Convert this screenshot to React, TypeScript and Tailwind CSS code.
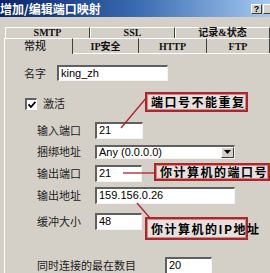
import React from "react";

const cjk = { fontFamily: '"Noto Sans CJK SC", "Liberation Sans", sans-serif' };
const latin = { fontFamily: '"Liberation Sans", "Noto Sans CJK SC", sans-serif' };
const serif = { fontFamily: '"Liberation Serif", "Noto Sans CJK SC", serif' };

function Field({ value, w, h = "h-[17px]" }: { value: string; w: string; h?: string }) {
    return (
        <div
            className={`${w} ${h} bg-white border-t-2 border-l-2 border-t-[#606060] border-l-[#606060] border-b border-r border-b-[#f4f4f4] border-r-[#f4f4f4] text-[11px] leading-[13px] pl-[2px] text-black`}
            style={latin}
        >
            {value}
        </div>
    );
}

function Row({ label, children, mt, h = "h-[17px]" }: { label: string; children: React.ReactNode; mt: string; h?: string }) {
    return (
        <div className={`flex items-center ${h} ${mt}`}>
            <span className="w-[90px] pl-[32px] whitespace-nowrap text-[11px] leading-[13px] text-[#222]" style={cjk}>
                {label}
            </span>
            {children}
        </div>
    );
}

function Callout({ text, className }: { text: string; className: string }) {
    return (
        <div
            className={`absolute border-2 border-[#a8282c] bg-[#e6e0de] shadow-[inset_0_0_0_1px_#e08080] flex items-center px-[4px] text-[12px] leading-[14px] font-bold tracking-[1.5px] text-black whitespace-nowrap ${className}`}
            style={cjk}
        >
            {text}
        </div>
    );
}

export default function App() {
    const row1 = [
        { label: "SMTP", w: "w-[85px]" },
        { label: "SSL", w: "w-[85px]" },
        { label: "记录&状态", w: "w-[95px]" },
    ];
    const row2 = [
        { label: "IP安全", w: "w-[66px]" },
        { label: "HTTP", w: "w-[68px]" },
        { label: "FTP", w: "w-[63px]" },
    ];

    return (
        <div className="relative w-[270px] h-[273px] overflow-hidden bg-[#d4d0c8]">
            {/* title bar */}
            <div className="h-[17px] flex items-center justify-between bg-gradient-to-r from-[#0a246a] via-[#3a6ab0] to-[#a6caf0]">
                <span className="text-white text-[12px] font-bold leading-none" style={cjk}>
                    增加/编辑端口映射
                </span>
                <div className="flex gap-[1px] mr-[-4px]">
                    <div className="w-[11px] h-[10px] bg-[#d4d0c8] border border-t-white border-l-white border-b-[#404040] border-r-[#404040] text-[9px] font-bold leading-[8px] text-center text-black" style={latin}>
                        ?
                    </div>
                    <div className="w-[11px] h-[10px] bg-[#d4d0c8] border border-t-white border-l-white border-b-[#404040] border-r-[#404040]" />
                </div>
            </div>

            {/* tabs */}
            <div className="mt-[10px] pl-[5px]">
                <div className="flex h-[11px]">
                    {row1.map((t) => (
                        <div
                            key={t.label}
                            className={`${t.w} h-[11px] border-t border-l border-t-white border-l-white border-r border-r-[#404040] text-center text-[10px] leading-[10px] font-bold text-[#111]`}
                            style={serif}
                        >
                            {t.label}
                        </div>
                    ))}
                </div>
                <div className="flex h-[15px] ml-[-1px]">
                    <div className="w-[69px] h-[16px] border-t border-l border-t-white border-l-white border-r border-r-[#404040] bg-[#d4d0c8] z-10 pl-[19px] text-[11px] leading-[13px] text-black" style={cjk}>
                        常规
                    </div>
                    {row2.map((t) => (
                        <div
                            key={t.label}
                            className={`${t.w} border-t border-t-white border-r border-r-[#404040] text-center text-[10px] leading-[15px] font-bold text-[#111]`}
                            style={serif}
                        >
                            {t.label}
                        </div>
                    ))}
                </div>
            </div>

            {/* panel */}
            <div className="ml-[4px] h-[220px] border-t border-l border-t-white border-l-white">
                <div className="flex items-center h-[16px] mt-[11px]">
                    <span className="w-[52px] pl-[19px] text-[11px] leading-[13px] text-[#222]" style={cjk}>
                        名字
                    </span>
                    <Field value="king_zh" w="w-[111px]" h="h-[16px]" />
                </div>

                <div className="flex items-center h-[13px] mt-[16px] pl-[20px] gap-[6px]">
                    <div className="w-[12px] h-[12px] bg-white border-t-2 border-l-2 border-t-[#606060] border-l-[#606060] border-b border-r border-b-white border-r-white flex items-center justify-center">
                        <svg width="8" height="7" viewBox="0 0 8 7">
                            <path d="M0.5 3.5 L3 6 L7.5 0.8" stroke="#000" strokeWidth="1.8" fill="none" />
                        </svg>
                    </div>
                    <span className="text-[11px] leading-[13px] text-[#222]" style={cjk}>
                        激活
                    </span>
                </div>

                <Row label="输入端口" mt="mt-[12px]">
                    <Field value="21" w="w-[48px]" />
                </Row>
                <Row label="捆绑地址" mt="mt-[5px]" h="h-[15px]">
                    <div className="w-[140px] h-[14px] flex bg-white border-t-2 border-l-2 border-t-[#606060] border-l-[#606060] border-b border-r border-b-[#f4f4f4] border-r-[#f4f4f4]">
                        <span className="flex-1 text-[11px] leading-[11px] pl-[2px] text-black" style={latin}>
                            Any (0.0.0.0)
                        </span>
                        <div className="w-[13px] h-[11px] bg-[#d4d0c8] border border-t-white border-l-white border-b-[#404040] border-r-[#404040] flex items-center justify-center">
                            <svg width="7" height="4" viewBox="0 0 7 4">
                                <path d="M0 0 H7 L3.5 4 Z" fill="#000" />
                            </svg>
                        </div>
                    </div>
                </Row>
                <Row label="输出端口" mt="mt-[6px]">
                    <Field value="21" w="w-[47px]" />
                </Row>
                <Row label="输出地址" mt="mt-[5px]">
                    <Field value="159.156.0.26" w="w-[140px]" />
                </Row>
                <Row label="缓冲大小" mt="mt-[9px]">
                    <Field value="48" w="w-[47px]" />
                </Row>

                <div className="flex items-center h-[17px] mt-[27px]">
                    <span className="w-[160px] pl-[32px] whitespace-nowrap text-[11px] leading-[13px] text-[#222]" style={cjk}>
                        同时连接的最在数目
                    </span>
                    <Field value="20" w="w-[47px]" />
                </div>
            </div>

            {/* annotation lines */}
            <svg className="absolute inset-0 pointer-events-none" width="270" height="273">
                <line x1="147" y1="97" x2="121" y2="128" stroke="#b02030" strokeWidth="1.3" />
                <line x1="123" y1="173" x2="154" y2="173" stroke="#b02030" strokeWidth="1.3" />
                <line x1="137" y1="203" x2="150" y2="218" stroke="#b02030" strokeWidth="1.3" />
            </svg>

            <Callout text="端口号不能重复" className="left-[145px] top-[92px] w-[103px] h-[20px]" />
            <Callout text="你计算机的端口号" className="left-[154px] top-[163px] w-[116px] h-[18px]" />
            <Callout text="你计算机的IP地址" className="left-[145px] top-[217px] w-[103px] h-[23px]" />
        </div>
    );
}
